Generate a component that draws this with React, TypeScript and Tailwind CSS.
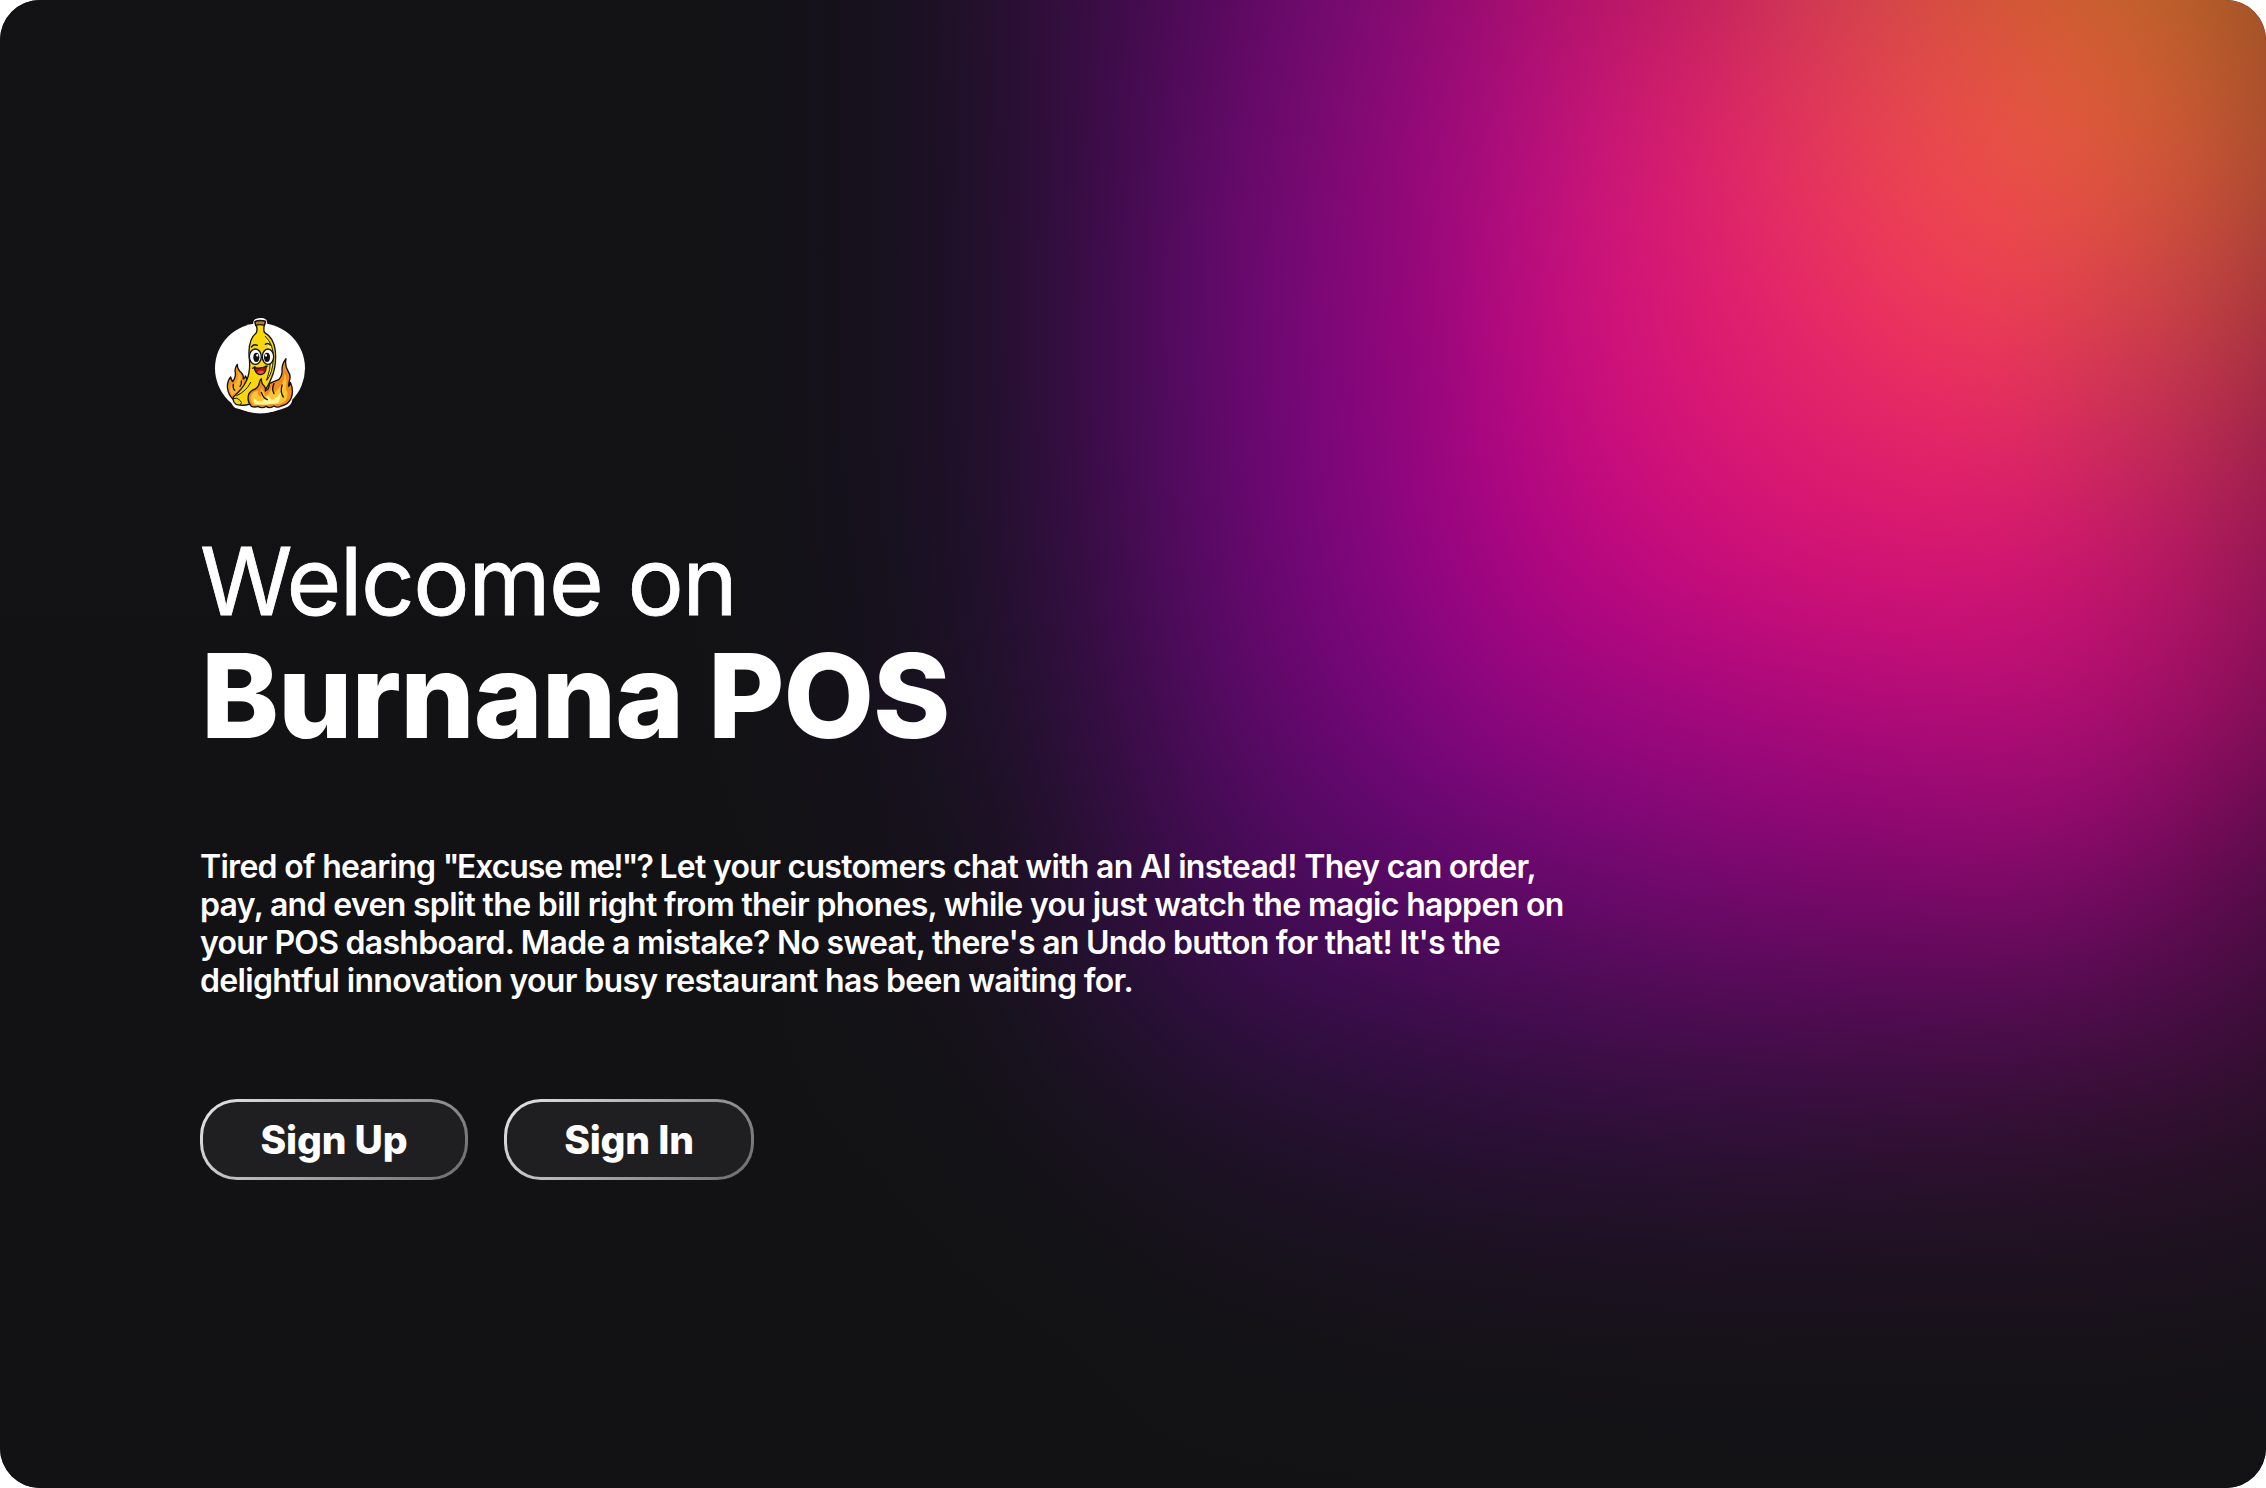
import React from 'react';

// Aurora colours sampled every 100px across (from x=700) and every STEP_Y down.
const AURORA: string[] = [
  '121214 141219 181120 26102f 3a0d46 53095b 6d0a6c 850b72 a30c72 b8156a c62060 d03754 d64848 d55538 cc602f b55e29 9c4d26',
  '121214 141219 181120 25102f 3b0c48 5a0a63 740a70 900878 ac0d7c c91678 dc226a e4355c ea464f ec5247 e05a3a c85832 a44c2c',
  '121214 141219 181120 24102f 3d0c4b 5c0a67 770876 900679 b20a7d ce127a dc1c70 e62a66 ee3759 ee4152 dc4548 c24440 a13837',
  '121214 141219 181120 24102f 3d0c4b 5a0a66 760678 8f067d b00682 ca0e7c d81674 de1e6d e42567 e42a63 ce2e5a b82c50 992144',
  '121214 131218 17111f 23102e 3a0c48 570a64 720676 8b067f a60481 ba0780 c80b7c d01077 d41374 d41473 c6146c ae1660 8d1453',
  '121214 131217 16111d 20112b 340d42 4e0b5c 65076d 78067a 8e067e 9a067f a2077e aa087b b00a7a b20c77 ac0d70 980e62 7d0d53',
  '121214 121216 161119 1a1122 2c0e38 400c50 4f0a60 5c086c 680870 730873 7c0873 820772 87076f 8a096d 820968 6c0a56 540b47',
  '121214 121215 141217 17121c 23102f 2f0e3f 380d4a 3e0c4e 450c52 4b0c54 500b55 520b56 530a55 540b54 500c4e 480c45 3a0d37',
  '121214 121214 121215 131217 17121c 1c1124 21112b 241030 280f34 2a1035 2c1036 2d1035 2e1032 2e1030 2c102c 2a1029 241024',
  '121214 121214 121214 121214 121215 141217 151219 17121b 18121c 19121d 1a121d 1a121d 1a121d 1a121d 1a121d 19121c 17131b',
  '121214 121214 121214 121214 121214 121214 121214 121214 121214 121214 121215 121215 121215 121215 121215 121214 121214',
];

const LEFT = 700;
const STEP_X = 100;
const STEP_Y = 142.5;

const GRID: number[][][] = AURORA.map((row) =>
  row.split(' ').map((h) => [0, 2, 4].map((i) => parseInt(h.slice(i, i + 2), 16))),
);

// Cubic B-spline weights keep the mesh free of visible cell edges.
const spline = (t: number) => [
  (1 - t) ** 3 / 6,
  (3 * t ** 3 - 6 * t ** 2 + 4) / 6,
  (-3 * t ** 3 + 3 * t ** 2 + 3 * t + 1) / 6,
  t ** 3 / 6,
];

function at(r: number, c: number, ch: number): number {
  if (r < 0) return 2 * at(0, c, ch) - at(-r, c, ch);
  if (c > 16) return 2 * at(r, 16, ch) - at(r, 32 - c, ch);
  return GRID[Math.min(r, 10)][Math.max(c, 0)][ch];
}

function sample(x: number, y: number): string {
  const u = (x - LEFT) / STEP_X;
  const v = y / STEP_Y;
  const c = Math.floor(u);
  const r = Math.floor(v);
  const wx = spline(u - c);
  const wy = spline(v - r);
  const rgb = [0, 1, 2].map((ch) => {
    let sum = 0;
    for (let j = 0; j < 4; j++)
      for (let i = 0; i < 4; i++) sum += wy[j] * wx[i] * at(r - 1 + j, c - 1 + i, ch);
    return sum.toFixed(2);
  });
  return `rgb(${rgb.join(' ')})`;
}

function rowGradient(y: number): string {
  const stops: string[] = [];
  for (let x = LEFT; x <= 2266; x += 27) stops.push(`${sample(x, y)} ${x}px`);
  return `linear-gradient(90deg, ${stops.join(', ')})`;
}

function Aurora() {
  return (
    <div className="col-start-1 row-start-1 flex flex-col" aria-hidden="true">
      {Array.from({ length: 372 }, (_, i) => (
        <div key={i} className="h-[4px]" style={{ background: rowGradient(i * 4 + 2) }} />
      ))}
    </div>
  );
}

function Logo() {
  return (
    <svg viewBox="0 0 360 360" className="size-[120px]" role="img" aria-label="Burnana">
      <circle cx="180" cy="190" r="135" fill="#fff" />
      <path
        d="M160 50Q162 40 181 39Q199 38 201 50L204 78L158 78ZM92 286Q96 304 106 309Q150 322 181 325Q225 322 262 306Q274 300 277 286Z"
        fill="#fff"
      />
      <g stroke="#111" strokeWidth="4" strokeLinejoin="round" strokeLinecap="round">
        <path
          d="M104 287Q84 272 82 246Q82 228 92 216Q94 226 98 230Q108 216 106 203Q103 190 112 178Q112 194 124 203Q132 211 130 222Q136 220 136 213Q146 226 138 242Q126 262 104 287Z"
          fill="#f7941d"
        />
        <path
          d="M165 50Q180 43 196 49L193 62Q190 72 193 82Q222 98 226 138Q230 185 214 220Q200 260 165 290Q140 306 108 298Q96 288 100 276Q128 252 140 226Q152 198 148 160Q142 106 169 83Q174 70 167 60Z"
          fill="#f8d808"
        />
        <path d="M165 50Q180 44 196 49L193 61Q180 57 167 61Z" fill="#bd7a2c" />
        <path d="M196 94Q222 120 220 160Q218 206 200 226Q212 194 212 160" fill="#fff04a" strokeWidth="3" />
        <path d="M100 280Q112 276 120 286Q128 292 122 299" fill="none" strokeWidth="3" />
        <path d="M110 272Q140 258 152 232" fill="none" strokeWidth="3" />
        <path
          d="M154 304Q140 288 146 268Q152 256 166 252Q176 246 178 234Q178 226 184 221Q184 236 192 242Q198 248 196 258Q208 252 208 236Q220 230 236 224Q248 212 246 194Q246 176 258 161Q254 184 264 198Q274 212 268 228Q266 238 266 244Q270 240 271 232Q282 256 274 278Q266 298 244 303Q232 310 222 303Q210 312 198 304Q186 312 174 304Q164 308 154 304Z"
          fill="#f58a1c"
        />
      </g>
      <path
        d="M160 299Q148 284 154 270Q162 258 174 258Q172 272 184 276Q180 258 184 250Q196 264 194 274Q212 266 216 242Q222 252 222 264Q234 254 246 236Q254 224 254 206Q262 222 258 240Q256 254 262 262Q264 280 252 292Q232 302 216 296Q196 302 184 297Q170 301 160 299Z"
        fill="#fdc62f"
      />
      <path
        d="M166 297Q158 288 162 280Q172 292 184 288Q200 284 204 270Q208 282 218 284Q236 276 242 262Q244 280 234 294Q190 302 166 297Z"
        fill="#fff59a"
      />
      <path d="M92 262Q88 242 96 238Q104 242 112 226Q116 212 114 200Q126 212 122 226Q132 232 130 240Q112 262 96 270Z" fill="#fdb62c" />
      <g fill="none" stroke="#111" strokeWidth="4" strokeLinecap="round">
        <path d="M184 262Q190 280 202 284" />
        <path d="M222 236Q214 252 222 266" />
        <path d="M246 240Q240 262 250 276" />
        <path d="M100 238Q98 250 104 256M124 228Q126 236 120 244" />
      </g>
      <g stroke="#111" strokeWidth="4">
        <ellipse cx="166" cy="155" rx="18" ry="23" fill="#fff" />
        <ellipse cx="204" cy="155" rx="17" ry="23" fill="#fff" />
      </g>
      <ellipse cx="169" cy="157" rx="9" ry="14" fill="#111" />
      <ellipse cx="201" cy="157" rx="9" ry="14" fill="#111" />
      <ellipse cx="172" cy="151" rx="3" ry="4" fill="#fff" />
      <ellipse cx="198" cy="151" rx="3" ry="4" fill="#fff" />
      <path d="M154 126Q162 116 172 121M196 118Q204 112 211 120" fill="none" stroke="#111" strokeWidth="4" strokeLinecap="round" />
      <path d="M162 188Q182 192 199 184Q198 208 182 209Q167 208 162 188Z" fill="#a31414" stroke="#111" strokeWidth="3.5" strokeLinejoin="round" />
      <path d="M171 201Q182 192 193 200Q188 207 182 207Q175 207 171 201Z" fill="#f04a4a" />
      <path d="M158 190L165 185M196 184L203 183" stroke="#111" strokeWidth="3.5" strokeLinecap="round" />
    </svg>
  );
}

function PillButton({ label, className }: { label: string; className: string }) {
  return (
    <button
      type="button"
      className={`h-[81px] rounded-[37px] bg-[linear-gradient(135deg,#e6e6e8,#6a6a6a)] p-[3px] ${className}`}
    >
      <span className="flex size-full items-center justify-center rounded-[34px] bg-[#1f1f21] pb-px text-[39px] leading-none font-extrabold tracking-[-0.005em]">
        {label}
      </span>
    </button>
  );
}

export default function App() {
  return (
    <div className="h-[1488px] w-[2266px] bg-white">
      <main className="grid h-full w-full overflow-hidden rounded-[40px] bg-[#121214] font-['Inter',sans-serif] text-white">
        <Aurora />
        <section className="z-10 col-start-1 row-start-1 flex flex-col items-start pt-[305px] pl-[200px]">
          <Logo />
          <h1 className="mt-[99px] flex flex-col">
            <span className="text-[94px] leading-[114px] font-normal tracking-[-0.0155em] [-webkit-text-stroke:0.8px_white]">
              Welcome on
            </span>
            <span className="pl-px text-[117.3px] leading-[114px] font-extrabold tracking-[-0.0085em]">Burnana POS</span>
          </h1>
          <p className="mt-[96px] text-[32px] leading-[38px] font-semibold tracking-[-0.67px] whitespace-nowrap">
            <span className="tracking-[-0.7px]">
              Tired of hearing <span className="tracking-[-2.6px]">"</span>
              <span className="tracking-[-1.1px]">Excuse</span> <span className="tracking-[-1.9px]">me!"?</span> Let your
              customers chat with an AI instead! They can order,
            </span>
            <br />
            pay, and even split the bill right from their phones, while you just watch the magic happen on
            <br />
            <span className="tracking-[-0.73px]">
              your POS dashboard. Made a mistake? No sweat, there's an Undo button for that! It's the
            </span>
            <br />
            delightful innovation your busy restaurant has been waiting for.
          </p>
          <div className="mt-[99px] flex gap-[36px]">
            <PillButton label="Sign Up" className="w-[268px]" />
            <PillButton label="Sign In" className="w-[250px]" />
          </div>
        </section>
      </main>
    </div>
  );
}
